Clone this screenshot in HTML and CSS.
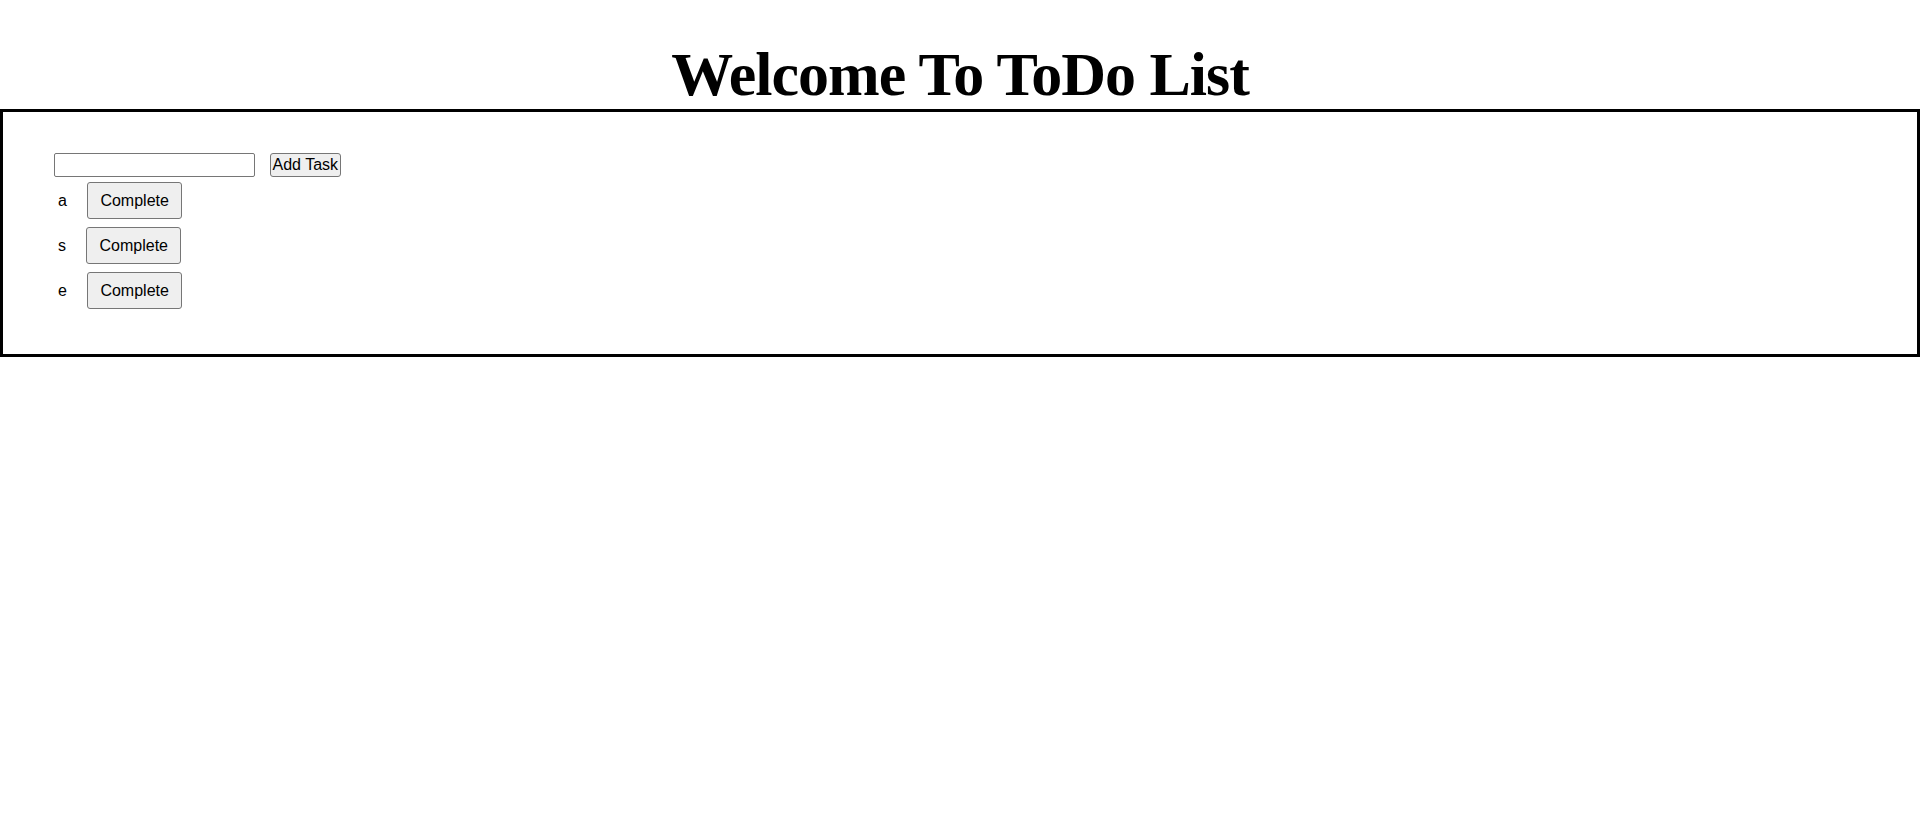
FILE: index.html
```html
<!DOCTYPE html>
<html lang="en">
<head>
<meta charset="utf-8">
<title>ToDo List</title>
<link rel="stylesheet" href="styles.css">
</head>
<body>
<h1 class="title">Welcome To ToDo List</h1>
<div class="todo-box">
  <div class="add-row">
    <input class="task-input" type="text">
    <button class="add-btn" type="button">Add Task</button>
  </div>
  <ul class="task-list">
    <li class="task"><span class="task-name">a</span><button class="complete-btn" type="button">Complete</button></li>
    <li class="task"><span class="task-name">s</span><button class="complete-btn" type="button">Complete</button></li>
    <li class="task"><span class="task-name">e</span><button class="complete-btn" type="button">Complete</button></li>
  </ul>
</div>
</body>
</html>
```

FILE: styles.css
```css
html, body {
  margin: 0;
  padding: 0;
  background: #ffffff;
}

body {
  font-family: "Liberation Sans", Arial, sans-serif;
  font-size: 16px;
  color: #000000;
}

.title {
  margin: 39px 0 0;
  font-family: "Liberation Serif", "Times New Roman", serif;
  font-weight: bold;
  font-size: 62px;
  line-height: 70px;
  letter-spacing: -1px;
  text-align: center;
}

.todo-box {
  border: 3px solid #000000;
  padding: 41px 0 41px 51px;
}

.add-row {
  display: flex;
  align-items: center;
  gap: 15px;
  height: 24px;
}

.task-input {
  box-sizing: border-box;
  width: 201px;
  height: 24px;
  margin: 0;
  padding: 1px 2px;
  border: 1px solid #767676;
  border-radius: 2px;
  font-family: "Liberation Sans", Arial, sans-serif;
  font-size: 16px;
  background: #ffffff;
}

.add-btn {
  box-sizing: border-box;
  height: 24px;
  margin: 0;
  padding: 0 1.5px;
  border: 1px solid #767676;
  border-radius: 3px;
  background: #efefef;
  color: #000000;
  font-family: "Liberation Sans", Arial, sans-serif;
  font-size: 16px;
  line-height: normal;
}

.task-list {
  list-style: none;
  margin: 1px 0 0;
  padding: 0;
}

.task {
  display: flex;
  align-items: center;
  gap: 20px;
  padding: 4px;
}

.task-name {
  line-height: 19px;
}

.complete-btn {
  box-sizing: border-box;
  height: 37px;
  margin: 0;
  padding: 8px 12.5px;
  border: 1px solid #767676;
  border-radius: 3px;
  background: #efefef;
  color: #000000;
  font-family: "Liberation Sans", Arial, sans-serif;
  font-size: 16px;
  line-height: 19px;
}
```
